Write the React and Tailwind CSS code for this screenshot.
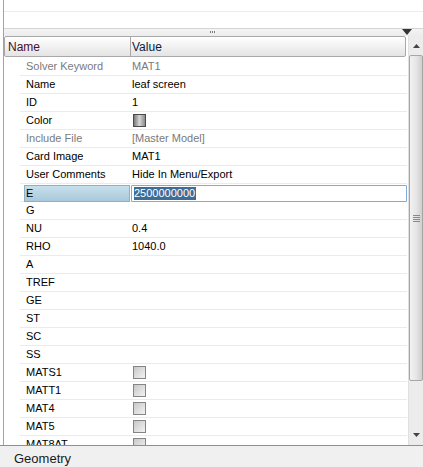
import React from "react";

const rows = [
  { n: "Solver Keyword", v: "MAT1", gray: true },
  { n: "Name", v: "leaf screen" },
  { n: "ID", v: "1" },
  { n: "Color", type: "color" },
  { n: "Include File", v: "[Master Model]", gray: true },
  { n: "Card Image", v: "MAT1" },
  { n: "User Comments", v: "Hide In Menu/Export" },
  { n: "E", type: "edit" },
  { n: "G", v: "" },
  { n: "NU", v: "0.4" },
  { n: "RHO", v: "1040.0" },
  { n: "A", v: "" },
  { n: "TREF", v: "" },
  { n: "GE", v: "" },
  { n: "ST", v: "" },
  { n: "SC", v: "" },
  { n: "SS", v: "" },
  { n: "MATS1", type: "check" },
  { n: "MATT1", type: "check" },
  { n: "MAT4", type: "check" },
  { n: "MAT5", type: "check" },
  { n: "MAT8AT", type: "check" },
];

function Check() {
  return (
    <div className="w-[13px] h-[13px] ml-[2px] border border-[#858585] bg-gradient-to-br from-[#c8c8c8] to-[#f2f2f2]" />
  );
}

function Row({ r }) {
  const textColor = r.gray ? "text-[#7a7a7a]" : "text-[#000]";
  return (
    <div className="flex h-[18px] pl-[16px]">
      <div className="flex flex-1 h-full border-b border-[#e2eef5]">
        <div className="w-[110px] h-full flex items-center pl-[4px]">
          {r.type === "edit" ? (
            <div className="w-full h-[17px] mt-[1px] flex items-center pl-[1px] border border-[#8cb0c4] bg-gradient-to-b from-[#c6dfec] to-[#a9c9da] text-black">
              {r.n}
            </div>
          ) : (
            <span className={"pl-[2px] " + textColor}>{r.n}</span>
          )}
        </div>
        <div className="flex-1 h-full flex items-center pl-[1px]">
          {r.type === "edit" ? (
            <div className="w-full h-[17px] mt-[1px] border border-[#7eaad8] bg-white flex items-center pl-[2px] rounded-[1px]">
              <span className="bg-[#3b6d98] text-white leading-[13px] pr-[1px]">2500000000</span>
            </div>
          ) : r.type === "color" ? (
            <div className="w-[13px] h-[13px] ml-[2px] border border-[#4a4a4a] bg-gradient-to-r from-[#7c7c7c] via-[#d6d6d6] to-[#8c8c8c]" />
          ) : r.type === "check" ? (
            <Check />
          ) : (
            <span className={"pl-[1px] " + textColor}>{r.v}</span>
          )}
        </div>
      </div>
    </div>
  );
}

export default function App() {
  return (
    <div className="w-[423px] h-[467px] flex flex-col bg-white font-['Liberation_Sans',Arial,sans-serif] text-[11px] overflow-hidden">
      <div className="ml-[3px] border-l border-[#a3a3a3] flex flex-col h-[445px] bg-white">
        {/* top area */}
        <div className="h-[28px] flex flex-col">
          <div className="h-[11px]" />
          <div className="h-px bg-[#e6eef5]" />
        </div>
        {/* splitter */}
        <div className="relative h-[8px] border-t border-[#d4d4d4] bg-gradient-to-b from-[#f4f4f4] to-[#ececec]">
          <div className="absolute left-[206px] top-[2px] flex gap-px">
            <div className="w-px h-[2px] bg-[#7a7a7a]" />
            <div className="w-px h-[2px] bg-[#7a7a7a]" />
            <div className="w-px h-[2px] bg-[#7a7a7a]" />
          </div>
          <svg className="absolute left-[398px] top-0" width="10" height="7" viewBox="0 0 10 7">
            <polygon points="0,0 10,0 5,6" fill="#333" />
          </svg>
        </div>
        {/* main */}
        <div className="flex flex-1 min-h-0">
          <div className="w-[403px] flex flex-col min-h-0 overflow-hidden">
            <div className="h-[21px] flex mr-[1px] border border-[#a8a8a8] rounded-[2px] bg-gradient-to-b from-[#ffffff] to-[#e4e4e4] text-[12px]">
              <div className="w-[126px] border-r border-[#a8a8a8] flex items-center pl-[3px] pt-px text-[#4b0d2b]">Name</div>
              <div className="flex-1 flex items-center pl-[1px] pt-px text-[#0d1a40]">Value</div>
            </div>
            <div className="flex-1 min-h-0 overflow-hidden pt-px">
              {rows.map((r) => (
                <Row key={r.n} r={r} />
              ))}
            </div>
          </div>
          <div className="w-px" />
          <div className="w-[15px] flex flex-col bg-[#ececec] border-l border-[#e0e0e0]">
            <div className="h-[19px] flex items-center justify-center">
              <svg width="7" height="4" viewBox="0 0 7 4"><polygon points="0,4 7,4 3.5,0" fill="#444" /></svg>
            </div>
            <div className="h-[326px] border border-[#a6a6a6] rounded-[2px] bg-gradient-to-r from-[#f2f2f2] via-[#e6e6e6] to-[#cfcfcf] flex items-center justify-center">
              <div className="flex flex-col gap-[1px]">
                <div className="w-[7px] h-px bg-[#8a8a8a]" />
                <div className="w-[7px] h-px bg-[#8a8a8a]" />
                <div className="w-[7px] h-px bg-[#8a8a8a]" />
                <div className="w-[7px] h-px bg-[#8a8a8a]" />
              </div>
            </div>
            <div className="flex-1" />
            <div className="h-[20px] flex items-center justify-center">
              <svg width="7" height="4" viewBox="0 0 7 4"><polygon points="0,0 7,0 3.5,4" fill="#444" /></svg>
            </div>
          </div>
        </div>
      </div>
      <div className="flex-1 bg-[#f0f0f0] border-t border-[#8f8f8f] flex items-center pl-[14px] pt-[3px] text-[13px] text-[#1a1a1a]">
        Geometry
      </div>
    </div>
  );
}
